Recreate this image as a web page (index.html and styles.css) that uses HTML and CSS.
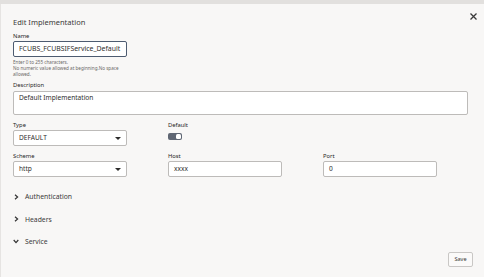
FILE: index.html
```html
<!DOCTYPE html>
<html>
<head>
<meta charset="utf-8">
<link rel="stylesheet" href="styles.css">
</head>
<body>
<div class="topbar"></div>
<div class="dialog">
  <button class="close" aria-label="Close">
    <svg width="7" height="7" viewBox="0 0 7 7"><path d="M0.5 0.5L6.5 6.5M6.5 0.5L0.5 6.5" stroke="#3a3a3a" stroke-width="1.3"/></svg>
  </button>
  <div class="title">Edit Implementation</div>
  <div class="field name-field">
    <div class="label">Name</div>
    <div class="input focused">FCUBS_FCUBSIFService_Default</div>
    <div class="help">Enter 0 to 255 characters.<br>No numeric value allowed at beginning.No space allowed.</div>
  </div>
  <div class="field desc-field">
    <div class="label">Description</div>
    <div class="textarea">Default Implementation</div>
  </div>
  <div class="grid">
    <div class="field">
      <div class="label">Type</div>
      <div class="input select">DEFAULT<span class="caret"></span></div>
    </div>
    <div class="field">
      <div class="label">Default</div>
      <div class="toggle"><span class="knob"></span></div>
    </div>
    <div class="field"></div>
    <div class="field">
      <div class="label">Scheme</div>
      <div class="input select">http<span class="caret"></span></div>
    </div>
    <div class="field">
      <div class="label">Host</div>
      <div class="input">xxxx</div>
    </div>
    <div class="field">
      <div class="label">Port</div>
      <div class="input">0</div>
    </div>
  </div>
  <div class="sections">
    <div class="section"><svg class="chev" width="5" height="6" viewBox="0 0 5 6"><path d="M1 0.7L3.6 3L1 5.3" fill="none" stroke="#333" stroke-width="1.2"/></svg>Authentication</div>
    <div class="section"><svg class="chev" width="5" height="6" viewBox="0 0 5 6"><path d="M1 0.7L3.6 3L1 5.3" fill="none" stroke="#333" stroke-width="1.2"/></svg>Headers</div>
    <div class="section"><svg class="chev down" width="6" height="5" viewBox="0 0 6 5"><path d="M0.7 1L3 3.6L5.3 1" fill="none" stroke="#333" stroke-width="1.2"/></svg>Service</div>
  </div>
  <div class="footer"><button class="save">Save</button></div>
</div>
</body>
</html>
```
FILE: styles.css
```css
html, body {
  margin: 0;
  padding: 0;
  background: #f8f7f6;
  font-family: "Noto Sans", "Open Sans", sans-serif;
  color: #2d2c2b;
}
.topbar {
  height: 4px;
  background: #e2e0de;
}
.dialog {
  position: relative;
  height: 273px;
  box-sizing: border-box;
  padding: 13px 12px 0 12px;
  border-left: 1px solid #e6e4e2;
}
.close {
  position: absolute;
  top: 9px;
  right: 7px;
  border: none;
  background: none;
  padding: 0;
  width: 7px;
  height: 7px;
  line-height: 0;
}
.title {
  font-size: 7.5px;
  line-height: 10px;
  color: #3a3938;
}
.field {
  display: flex;
  flex-direction: column;
}
.label {
  font-size: 5.8px;
  line-height: 8px;
  font-weight: 400;
  color: #1f1e1d;
  margin-bottom: 1px;
}
.name-field {
  margin-top: 5px;
  width: 114px;
}
.input {
  box-sizing: border-box;
  height: 16px;
  border: 1px solid #bdbbb9;
  border-radius: 2px;
  background: #fff;
  font-size: 6.6px;
  line-height: 14px;
  padding: 0 5px;
  color: #2f2e2d;
  position: relative;
}
.input.focused {
  border: 1px solid #4d5b70;
  font-size: 6.9px;
}
.help {
  font-size: 4.6px;
  line-height: 6px;
  color: #6a6866;
  margin-top: 2px;
  width: 114px;
}
.desc-field {
  margin-top: 4px;
  margin-right: 4px;
}
.desc-field .label {
  margin-bottom: 2px;
}
.textarea {
  box-sizing: border-box;
  height: 24px;
  border: 1px solid #bdbbb9;
  border-radius: 2px;
  background: #fff;
  font-size: 6.6px;
  line-height: 9px;
  padding: 1px 5px;
  color: #2f2e2d;
}
.grid {
  display: grid;
  grid-template-columns: 114px 114px 114px;
  column-gap: 41px;
  row-gap: 6px;
  margin-top: 6px;
}
.select .caret {
  position: absolute;
  right: 5px;
  top: 6px;
  width: 0;
  height: 0;
  border-left: 3px solid transparent;
  border-right: 3px solid transparent;
  border-top: 3px solid #2d2c2b;
}
.toggle {
  margin-top: 3px;
  width: 14px;
  height: 7px;
  border-radius: 2px;
  background: #5f6673;
  position: relative;
}
.knob {
  position: absolute;
  right: 1px;
  top: 1px;
  width: 5px;
  height: 5px;
  border-radius: 1.5px;
  background: #fff;
}
.sections {
  margin-top: 15px;
  display: flex;
  flex-direction: column;
  gap: 13px;
}
.section {
  display: flex;
  align-items: center;
  font-size: 6.8px;
  line-height: 9.5px;
  color: #3a3938;
}
.chev {
  margin-left: 1px;
  margin-right: 6px;
}
.chev.down {
  margin-left: 0;
  margin-right: 6px;
}
.footer {
  display: flex;
  justify-content: flex-end;
  margin-top: 5px;
  margin-right: -1px;
}
.save {
  box-sizing: border-box;
  height: 15px;
  width: 25px;
  padding: 0;
  border: 1px solid #c9c7c5;
  border-radius: 2px;
  background: #fbfaf9;
  font-family: "Noto Sans", sans-serif;
  font-size: 5.6px;
  color: #3a3938;
}
```
